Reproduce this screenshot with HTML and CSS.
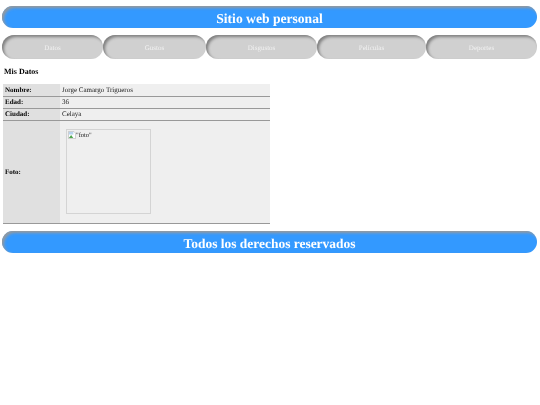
FILE: index.html
```html
<!DOCTYPE html>
<html lang="es">
<head>
    <meta charset="UTF-8">
    <title>Sitio web personal</title>
    <link rel="stylesheet" href="styles.css">
</head>
<body>
    <header class="banner">Sitio web personal</header>
    <nav class="menu">
        <a class="tab">Datos</a>
        <a class="tab">Gustos</a>
        <a class="tab">Disgustos</a>
        <a class="tab">Películas</a>
        <a class="tab">Deportes</a>
    </nav>
    <h1 class="section-title">Mis Datos</h1>
    <table class="data">
        <tr class="first-row">
            <th>Nombre:</th>
            <td>Jorge Camargo Trigueros</td>
        </tr>
        <tr>
            <th>Edad:</th>
            <td>36</td>
        </tr>
        <tr>
            <th>Ciudad:</th>
            <td>Celaya</td>
        </tr>
        <tr>
            <th>Foto:</th>
            <td>
                <div class="photo">
                    <svg class="broken" width="8" height="8" viewBox="0 0 9 9">
                        <path d="M.5.5h6l2 2v6h-8z" fill="#fff" stroke="#a9a9a9" stroke-width=".6"/>
                        <path d="M1 1h5v3H1z" fill="#b9d3ee"/>
                        <path d="M1 8l2.5-3.5L6 8z" fill="#4fa64f"/>
                    </svg><span class="alt">"foto"</span>
                </div>
            </td>
        </tr>
    </table>
    <footer class="banner banner-foot">Todos los derechos reservados</footer>
</body>
</html>
```

FILE: styles.css
```css
html {
    background: #ffffff;
}
body {
    margin: 0;
    padding: 6px 3px 0 2px;
    font-family: "Liberation Serif", serif;
    text-rendering: geometricPrecision;
    color: #000000;
    filter: blur(0.4px);
}
.banner {
    height: 22px;
    line-height: 25px;
    text-align: center;
    font-size: 13.6px;
    font-weight: bold;
    color: #ffffff;
    background: #3399ff;
    border-radius: 11px;
    box-shadow: inset 2px 2px 3px #999999;
}
.banner-foot {
    margin-top: 7px;
    font-size: 13.45px;
}
.menu {
    display: grid;
    grid-template-columns: 101px 103px 111px 109px 111px;
    margin-top: 7px;
}
.tab {
    height: 24px;
    line-height: 27px;
    text-align: center;
    font-size: 7px;
    color: #f2f2f2;
    background: #d0d0d0;
    border-radius: 12px;
    box-shadow: inset 2px 2px 3px #808080;
}
.section-title {
    margin: 8px 0 7px 2px;
    font-size: 8px;
    line-height: 10px;
}
.data {
    width: 267px;
    margin-left: 1px;
    border-collapse: collapse;
    font-size: 7px;
    line-height: 11px;
}
.data th {
    width: 57px;
    padding: 0 0 0 2px;
    box-sizing: border-box;
    text-align: left;
    background: #e0e0e0;
    border-bottom: 1px solid #999999;
}
.data td {
    padding: 0 0 0 2px;
    height: 11px;
    background: #efefef;
    border-bottom: 1px solid #999999;
    color: #222222;
}
.data .first-row td {
    height: 12px;
}
.photo {
    width: 81px;
    height: 81px;
    margin: 8px 0 9px 4px;
    padding: 1px;
    border: 1px solid #d4d4d4;
    line-height: 8px;
}
.broken {
    vertical-align: top;
}
.alt {
    font-size: 6.5px;
}
```
